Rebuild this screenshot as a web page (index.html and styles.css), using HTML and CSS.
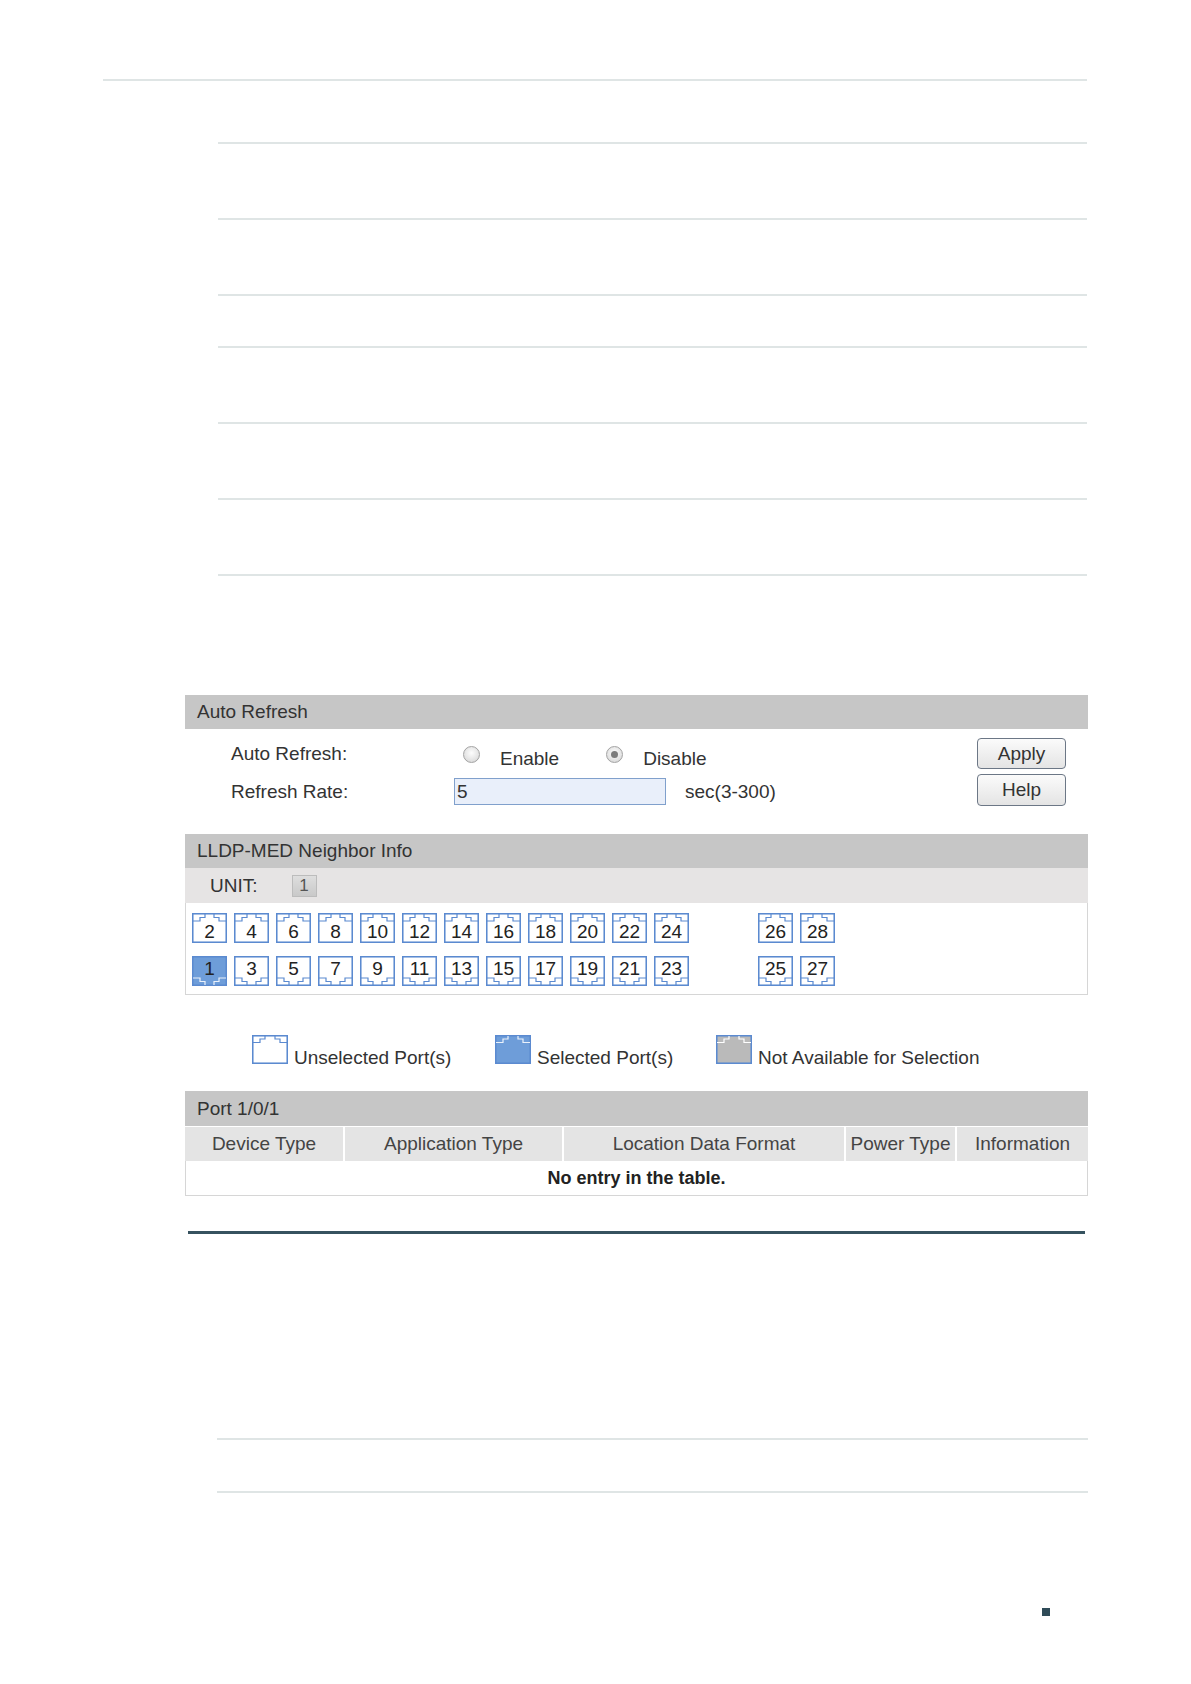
FILE: index.html
```html
<!DOCTYPE html>
<html lang="en">
<head>
<meta charset="utf-8">
<title>LLDP-MED Neighbor Info</title>
<link rel="stylesheet" href="styles.css">
</head>
<body>
<div class="page">
  <div class="rule rule-top"></div>
  <div class="rules">
    <div class="rule g61"></div>
    <div class="rule g74"></div>
    <div class="rule g74"></div>
    <div class="rule g50"></div>
    <div class="rule g74"></div>
    <div class="rule g74"></div>
    <div class="rule g74"></div>
  </div>

  <div class="ui">
    <div class="band">Auto Refresh</div>
    <div class="ar-body">
      <div class="ar-form">
        <div class="lbl lbl1">Auto Refresh:</div>
        <div class="radios">
          <span class="radio"></span><span class="rtext">Enable</span>
          <span class="radio checked second"></span><span class="rtext">Disable</span>
        </div>
        <div class="lbl">Refresh Rate:</div>
        <div class="rate-row">
          <input class="rate" type="text" value="5">
          <span class="sec">sec(3-300)</span>
        </div>
      </div>
      <div class="btns">
        <button class="btn">Apply</button>
        <button class="btn help">Help</button>
      </div>
    </div>

    <div class="band">LLDP-MED Neighbor Info</div>
    <div class="unit-row">
      <span>UNIT:</span>
      <span class="unit-box">1</span>
    </div>
    <div class="ports">
      <div class="port top"><svg viewBox="0 0 35 30"><rect class="rj-box" x=".75" y=".75" width="33.5" height="28.5"/><path class="rj-notch" d="M1 8H8V4.5H13V1M22 1V4.5H27V8H34"/></svg><span>2</span></div>
      <div class="port top"><svg viewBox="0 0 35 30"><rect class="rj-box" x=".75" y=".75" width="33.5" height="28.5"/><path class="rj-notch" d="M1 8H8V4.5H13V1M22 1V4.5H27V8H34"/></svg><span>4</span></div>
      <div class="port top"><svg viewBox="0 0 35 30"><rect class="rj-box" x=".75" y=".75" width="33.5" height="28.5"/><path class="rj-notch" d="M1 8H8V4.5H13V1M22 1V4.5H27V8H34"/></svg><span>6</span></div>
      <div class="port top"><svg viewBox="0 0 35 30"><rect class="rj-box" x=".75" y=".75" width="33.5" height="28.5"/><path class="rj-notch" d="M1 8H8V4.5H13V1M22 1V4.5H27V8H34"/></svg><span>8</span></div>
      <div class="port top"><svg viewBox="0 0 35 30"><rect class="rj-box" x=".75" y=".75" width="33.5" height="28.5"/><path class="rj-notch" d="M1 8H8V4.5H13V1M22 1V4.5H27V8H34"/></svg><span>10</span></div>
      <div class="port top"><svg viewBox="0 0 35 30"><rect class="rj-box" x=".75" y=".75" width="33.5" height="28.5"/><path class="rj-notch" d="M1 8H8V4.5H13V1M22 1V4.5H27V8H34"/></svg><span>12</span></div>
      <div class="port top"><svg viewBox="0 0 35 30"><rect class="rj-box" x=".75" y=".75" width="33.5" height="28.5"/><path class="rj-notch" d="M1 8H8V4.5H13V1M22 1V4.5H27V8H34"/></svg><span>14</span></div>
      <div class="port top"><svg viewBox="0 0 35 30"><rect class="rj-box" x=".75" y=".75" width="33.5" height="28.5"/><path class="rj-notch" d="M1 8H8V4.5H13V1M22 1V4.5H27V8H34"/></svg><span>16</span></div>
      <div class="port top"><svg viewBox="0 0 35 30"><rect class="rj-box" x=".75" y=".75" width="33.5" height="28.5"/><path class="rj-notch" d="M1 8H8V4.5H13V1M22 1V4.5H27V8H34"/></svg><span>18</span></div>
      <div class="port top"><svg viewBox="0 0 35 30"><rect class="rj-box" x=".75" y=".75" width="33.5" height="28.5"/><path class="rj-notch" d="M1 8H8V4.5H13V1M22 1V4.5H27V8H34"/></svg><span>20</span></div>
      <div class="port top"><svg viewBox="0 0 35 30"><rect class="rj-box" x=".75" y=".75" width="33.5" height="28.5"/><path class="rj-notch" d="M1 8H8V4.5H13V1M22 1V4.5H27V8H34"/></svg><span>22</span></div>
      <div class="port top"><svg viewBox="0 0 35 30"><rect class="rj-box" x=".75" y=".75" width="33.5" height="28.5"/><path class="rj-notch" d="M1 8H8V4.5H13V1M22 1V4.5H27V8H34"/></svg><span>24</span></div>
      <div class="port top c14"><svg viewBox="0 0 35 30"><rect class="rj-box" x=".75" y=".75" width="33.5" height="28.5"/><path class="rj-notch" d="M1 8H8V4.5H13V1M22 1V4.5H27V8H34"/></svg><span>26</span></div>
      <div class="port top"><svg viewBox="0 0 35 30"><rect class="rj-box" x=".75" y=".75" width="33.5" height="28.5"/><path class="rj-notch" d="M1 8H8V4.5H13V1M22 1V4.5H27V8H34"/></svg><span>28</span></div>

      <div class="port bot sel"><svg viewBox="0 0 35 30"><rect class="rj-box" x=".75" y=".75" width="33.5" height="28.5"/><path class="rj-notch" d="M1 22H8V25.5H13V29M22 29V25.5H27V22H34"/></svg><span>1</span></div>
      <div class="port bot"><svg viewBox="0 0 35 30"><rect class="rj-box" x=".75" y=".75" width="33.5" height="28.5"/><path class="rj-notch" d="M1 22H8V25.5H13V29M22 29V25.5H27V22H34"/></svg><span>3</span></div>
      <div class="port bot"><svg viewBox="0 0 35 30"><rect class="rj-box" x=".75" y=".75" width="33.5" height="28.5"/><path class="rj-notch" d="M1 22H8V25.5H13V29M22 29V25.5H27V22H34"/></svg><span>5</span></div>
      <div class="port bot"><svg viewBox="0 0 35 30"><rect class="rj-box" x=".75" y=".75" width="33.5" height="28.5"/><path class="rj-notch" d="M1 22H8V25.5H13V29M22 29V25.5H27V22H34"/></svg><span>7</span></div>
      <div class="port bot"><svg viewBox="0 0 35 30"><rect class="rj-box" x=".75" y=".75" width="33.5" height="28.5"/><path class="rj-notch" d="M1 22H8V25.5H13V29M22 29V25.5H27V22H34"/></svg><span>9</span></div>
      <div class="port bot"><svg viewBox="0 0 35 30"><rect class="rj-box" x=".75" y=".75" width="33.5" height="28.5"/><path class="rj-notch" d="M1 22H8V25.5H13V29M22 29V25.5H27V22H34"/></svg><span>11</span></div>
      <div class="port bot"><svg viewBox="0 0 35 30"><rect class="rj-box" x=".75" y=".75" width="33.5" height="28.5"/><path class="rj-notch" d="M1 22H8V25.5H13V29M22 29V25.5H27V22H34"/></svg><span>13</span></div>
      <div class="port bot"><svg viewBox="0 0 35 30"><rect class="rj-box" x=".75" y=".75" width="33.5" height="28.5"/><path class="rj-notch" d="M1 22H8V25.5H13V29M22 29V25.5H27V22H34"/></svg><span>15</span></div>
      <div class="port bot"><svg viewBox="0 0 35 30"><rect class="rj-box" x=".75" y=".75" width="33.5" height="28.5"/><path class="rj-notch" d="M1 22H8V25.5H13V29M22 29V25.5H27V22H34"/></svg><span>17</span></div>
      <div class="port bot"><svg viewBox="0 0 35 30"><rect class="rj-box" x=".75" y=".75" width="33.5" height="28.5"/><path class="rj-notch" d="M1 22H8V25.5H13V29M22 29V25.5H27V22H34"/></svg><span>19</span></div>
      <div class="port bot"><svg viewBox="0 0 35 30"><rect class="rj-box" x=".75" y=".75" width="33.5" height="28.5"/><path class="rj-notch" d="M1 22H8V25.5H13V29M22 29V25.5H27V22H34"/></svg><span>21</span></div>
      <div class="port bot"><svg viewBox="0 0 35 30"><rect class="rj-box" x=".75" y=".75" width="33.5" height="28.5"/><path class="rj-notch" d="M1 22H8V25.5H13V29M22 29V25.5H27V22H34"/></svg><span>23</span></div>
      <div class="port bot c14"><svg viewBox="0 0 35 30"><rect class="rj-box" x=".75" y=".75" width="33.5" height="28.5"/><path class="rj-notch" d="M1 22H8V25.5H13V29M22 29V25.5H27V22H34"/></svg><span>25</span></div>
      <div class="port bot"><svg viewBox="0 0 35 30"><rect class="rj-box" x=".75" y=".75" width="33.5" height="28.5"/><path class="rj-notch" d="M1 22H8V25.5H13V29M22 29V25.5H27V22H34"/></svg><span>27</span></div>
    </div>

    <div class="legend">
      <div class="leg">
        <svg class="leg-icon" viewBox="0 0 36 29"><rect class="rj-box" x=".75" y=".75" width="34.5" height="27.5"/><path class="rj-notch" d="M1 7.5H8V4H13V1M23 1V4H28V7.5H35"/></svg>
        <span>Unselected Port(s)</span>
      </div>
      <div class="leg sel">
        <svg class="leg-icon" viewBox="0 0 36 29"><rect class="rj-box" x=".75" y=".75" width="34.5" height="27.5"/><path class="rj-notch" d="M1 7.5H8V4H13V1M23 1V4H28V7.5H35"/></svg>
        <span>Selected Port(s)</span>
      </div>
      <div class="leg na">
        <svg class="leg-icon" viewBox="0 0 36 29"><rect class="rj-box" x=".75" y=".75" width="34.5" height="27.5"/><path class="rj-notch" d="M1 7.5H8V4H13V1M23 1V4H28V7.5H35"/></svg>
        <span>Not Available for Selection</span>
      </div>
    </div>

    <div class="tbl">
      <div class="band band35">Port 1/0/1</div>
      <div class="cols">
        <div class="col">Device Type</div>
        <div class="col">Application Type</div>
        <div class="col">Location Data Format</div>
        <div class="col">Power Type</div>
        <div class="col">Information</div>
      </div>
      <div class="empty">No entry in the table.</div>
    </div>
  </div>

  <div class="dark-rule"></div>

  <div class="rules rules2">
    <div class="rule g204"></div>
    <div class="rule g51"></div>
  </div>

  <div class="marker"></div>
</div>
</body>
</html>
```
FILE: styles.css
```css
html, body {
  margin: 0;
  padding: 0;
  background: #ffffff;
}

body {
  font-family: "Liberation Sans", Arial, sans-serif;
  font-size: 19px;
  color: #333333;
}

.page {
  width: 1191px;
  height: 1684px;
  overflow: hidden;
}

/* faint document rules */
.rule {
  height: 2px;
  background: #dfe5e5;
}

.rule-top {
  margin: 79px 0 0 103px;
  width: 984px;
}

.rules {
  margin-left: 218px;
  width: 869px;
}

.g61 { margin-top: 61px; }
.g74 { margin-top: 74px; }
.g50 { margin-top: 50px; }
.g204 { margin-top: 204px; }
.g51 { margin-top: 51px; }

/* UI screenshot */
.ui {
  margin: 119px 0 0 185px;
  width: 903px;
}

.band {
  height: 34px;
  line-height: 34px;
  background: #c6c6c6;
  padding-left: 12px;
  color: #333333;
}

.band35 {
  height: 35px;
  line-height: 35px;
}

.ar-body {
  display: flex;
  height: 105px;
  padding: 0 22px 0 46px;
  box-sizing: border-box;
}

.ar-form {
  display: grid;
  grid-template-columns: 223px auto;
  grid-template-rows: 30px 27px;
  row-gap: 7px;
  margin-top: 12px;
  align-items: center;
}

.lbl {
  line-height: 22px;
}

.lbl1 {
  margin-bottom: 5px;
}

.radios {
  display: flex;
  align-items: center;
  padding-left: 9px;
  height: 30px;
}

.radio {
  width: 17px;
  height: 17px;
  box-sizing: border-box;
  border-radius: 50%;
  border: 1px solid #a3a3a3;
  background: radial-gradient(circle at 50% 40%, #fdfdfd 0%, #e6e6e6 55%, #cfcfcf 100%);
  display: flex;
  align-items: center;
  justify-content: center;
  margin-bottom: 3px;
}

.radio.checked::after {
  content: "";
  width: 7px;
  height: 7px;
  border-radius: 50%;
  background: #7c7c7c;
}

.radio.second {
  margin-left: 47px;
}

.rtext {
  margin-left: 20px;
  padding-top: 5px;
  line-height: 22px;
}

.rate-row {
  display: flex;
  align-items: center;
}

.rate {
  width: 212px;
  height: 27px;
  box-sizing: border-box;
  border: 1px solid #80a0cc;
  background: #e9effa;
  font-family: "Liberation Sans", Arial, sans-serif;
  font-size: 19px;
  color: #333333;
  padding: 0 0 0 2px;
  margin: 0;
  outline: none;
}

.sec {
  margin-left: 19px;
}

.btns {
  margin-left: auto;
  margin-top: 9px;
  display: flex;
  flex-direction: column;
  gap: 5px;
}

.btn {
  width: 89px;
  height: 31px;
  box-sizing: border-box;
  border: 1px solid #6c7786;
  border-radius: 4px;
  background: linear-gradient(#fbfbfb, #e4e4e4);
  font-family: "Liberation Sans", Arial, sans-serif;
  font-size: 19px;
  color: #333333;
  padding: 0;
  margin: 0;
}

.btn.help {
  height: 32px;
}

.unit-row {
  height: 35px;
  background: #e6e4e4;
  display: flex;
  align-items: center;
  padding-left: 25px;
}

.unit-box {
  margin-left: 34px;
  width: 25px;
  height: 22px;
  box-sizing: border-box;
  border: 1px solid #bcbcbc;
  background: linear-gradient(#dedede, #c9c9c9);
  font-size: 17px;
  line-height: 20px;
  text-align: center;
  color: #555555;
}

.ports {
  border: 1px solid #d6d6d6;
  border-top: 0;
  padding: 10px 0 8px 6px;
  display: grid;
  grid-template-columns: repeat(12, 35px) 55px 35px 35px;
  grid-template-rows: 30px 30px;
  column-gap: 7px;
  row-gap: 13px;
}

.c14 {
  grid-column: 14;
}

.port {
  display: grid;
  width: 35px;
  height: 30px;
}

.port > svg,
.port > span {
  grid-area: 1 / 1;
}

.port svg {
  width: 35px;
  height: 30px;
  display: block;
}

.port span {
  justify-self: center;
  align-self: start;
  font-size: 19px;
  line-height: 19px;
  color: #222222;
}

.port.top span {
  margin-top: 9px;
}

.port.bot span {
  margin-top: 3px;
}

.rj-box {
  fill: #ffffff;
  stroke: #5b8ad0;
  stroke-width: 1.6;
}

.rj-notch {
  fill: none;
  stroke: #5b8ad0;
  stroke-width: 1.2;
}

.sel .rj-box {
  fill: #6e9dd9;
}

.sel .rj-notch {
  stroke: #eaf1fb;
}

.na .rj-box {
  fill: #bababa;
}

.na .rj-notch {
  stroke: #ffffff;
}

/* legend */
.legend {
  display: grid;
  grid-template-columns: 243px 221px auto;
  margin: 40px 0 0 67px;
  align-items: end;
}

.leg {
  display: flex;
  align-items: flex-end;
}

.leg-icon {
  width: 36px;
  height: 29px;
  display: block;
  flex: none;
}

.leg span {
  margin-left: 6px;
  line-height: 20px;
  margin-bottom: -4px;
}

/* table */
.tbl {
  margin-top: 27px;
}

.cols {
  display: grid;
  grid-template-columns: 158px 219px 282px 111px 133px;
  margin-top: 1px;
}

.col {
  height: 34px;
  line-height: 34px;
  background: #e4e4e4;
  text-align: center;
  color: #444444;
  border-left: 2px solid #ffffff;
}

.col:first-child {
  border-left: 0;
}

.empty {
  height: 35px;
  box-sizing: border-box;
  border: 1px solid #d6d6d6;
  border-top: 0;
  text-align: center;
  line-height: 34px;
  font-size: 18px;
  font-weight: bold;
  color: #222222;
}

.dark-rule {
  margin: 35px 0 0 188px;
  width: 897px;
  height: 3px;
  background: #36525f;
}

.rules2 {
  margin-left: 217px;
  width: 871px;
}

.marker {
  margin: 115px 0 0 1042px;
  width: 8px;
  height: 8px;
  background: #2f4b58;
}
```
